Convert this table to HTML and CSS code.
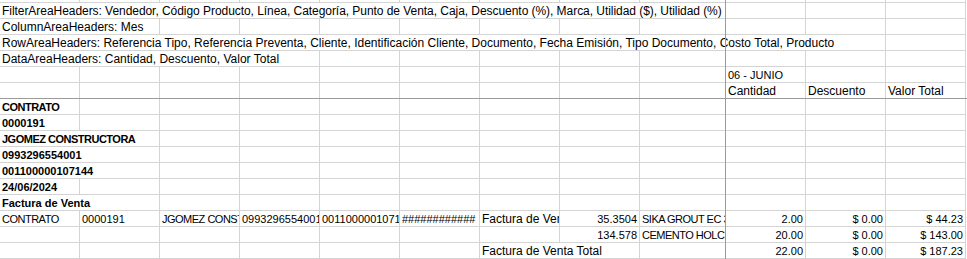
FILE: index.html
```html
<!DOCTYPE html>
<html lang="es">
<head>
<meta charset="utf-8">
<title>Hoja</title>
<link rel="stylesheet" href="styles.css">
</head>
<body>
<div class="sheet">
  <div class="grid">
    <!-- partial top row -->
    <div class="c top"></div><div class="c top"></div><div class="c top"></div><div class="c top"></div><div class="c top"></div><div class="c top"></div><div class="c top"></div><div class="c top"></div><div class="c top"></div><div class="c top"></div><div class="c top"></div><div class="c top"></div>

    <!-- row 1 -->
    <div class="c s9 fit">FilterAreaHeaders: Vendedor, Código Producto, Línea, Categoría, Punto de Venta, Caja, Descuento (%), Marca, Utilidad ($), Utilidad (%)</div>
    <div class="c"></div><div class="c"></div><div class="c"></div>

    <!-- row 2 -->
    <div class="c s2">ColumnAreaHeaders: Mes</div>
    <div class="c"></div><div class="c"></div><div class="c"></div><div class="c"></div><div class="c"></div><div class="c"></div><div class="c"></div><div class="c"></div><div class="c"></div><div class="c"></div>

    <!-- row 3 -->
    <div class="c s11">RowAreaHeaders: Referencia Tipo, Referencia Preventa, Cliente, Identificación Cliente, Documento, Fecha Emisión, Tipo Documento, Costo Total, Producto</div>
    <div class="c"></div>

    <!-- row 4 -->
    <div class="c s4">DataAreaHeaders: Cantidad, Descuento, Valor Total</div>
    <div class="c"></div><div class="c"></div><div class="c"></div><div class="c"></div><div class="c"></div><div class="c"></div><div class="c"></div><div class="c"></div>

    <!-- row 5 -->
    <div class="c"></div><div class="c"></div><div class="c"></div><div class="c"></div><div class="c"></div><div class="c"></div><div class="c"></div><div class="c"></div><div class="c"></div>
    <div class="c t">06 - JUNIO</div><div class="c"></div><div class="c"></div>

    <!-- row 6 -->
    <div class="c"></div><div class="c"></div><div class="c"></div><div class="c"></div><div class="c"></div><div class="c"></div><div class="c"></div><div class="c"></div><div class="c"></div>
    <div class="c">Cantidad</div><div class="c">Descuento</div><div class="c">Valor Total</div>

    <!-- row 7 -->
    <div class="c b k">CONTRATO</div>
    <div class="c"></div><div class="c"></div><div class="c"></div><div class="c"></div><div class="c"></div><div class="c"></div><div class="c"></div><div class="c"></div><div class="c"></div><div class="c"></div><div class="c"></div>

    <!-- row 8 -->
    <div class="c b">0000191</div>
    <div class="c"></div><div class="c"></div><div class="c"></div><div class="c"></div><div class="c"></div><div class="c"></div><div class="c"></div><div class="c"></div><div class="c"></div><div class="c"></div><div class="c"></div>

    <!-- row 9 -->
    <div class="c b k s2">JGOMEZ CONSTRUCTORA</div>
    <div class="c"></div><div class="c"></div><div class="c"></div><div class="c"></div><div class="c"></div><div class="c"></div><div class="c"></div><div class="c"></div><div class="c"></div><div class="c"></div>

    <!-- row 10 -->
    <div class="c b s2">0993296554001</div>
    <div class="c"></div><div class="c"></div><div class="c"></div><div class="c"></div><div class="c"></div><div class="c"></div><div class="c"></div><div class="c"></div><div class="c"></div><div class="c"></div>

    <!-- row 11 -->
    <div class="c b s2">001100000107144</div>
    <div class="c"></div><div class="c"></div><div class="c"></div><div class="c"></div><div class="c"></div><div class="c"></div><div class="c"></div><div class="c"></div><div class="c"></div><div class="c"></div>

    <!-- row 12 -->
    <div class="c b">24/06/2024</div>
    <div class="c"></div><div class="c"></div><div class="c"></div><div class="c"></div><div class="c"></div><div class="c"></div><div class="c"></div><div class="c"></div><div class="c"></div><div class="c"></div><div class="c"></div>

    <!-- row 13 -->
    <div class="c b s2">Factura de Venta</div>
    <div class="c"></div><div class="c"></div><div class="c"></div><div class="c"></div><div class="c"></div><div class="c"></div><div class="c"></div><div class="c"></div><div class="c"></div><div class="c"></div>

    <!-- row 14 -->
    <div class="c t k">CONTRATO</div>
    <div class="c t">0000191</div>
    <div class="c t k">JGOMEZ CONSTRUCTORA</div>
    <div class="c t">0993296554001</div>
    <div class="c t">001100000107144</div>
    <div class="c t">############</div>
    <div class="c">Factura de Venta</div>
    <div class="c t r">35.3504</div>
    <div class="c t k">SIKA GROUT EC 3 KG</div>
    <div class="c t r">2.00</div>
    <div class="c t r">$ 0.00</div>
    <div class="c t r">$ 44.23</div>

    <!-- row 15 -->
    <div class="c"></div><div class="c"></div><div class="c"></div><div class="c"></div><div class="c"></div><div class="c"></div><div class="c"></div>
    <div class="c t r">134.578</div>
    <div class="c t k">CEMENTO HOLCIM</div>
    <div class="c t r">20.00</div>
    <div class="c t r">$ 0.00</div>
    <div class="c t r">$ 143.00</div>

    <!-- row 16 -->
    <div class="c"></div><div class="c"></div><div class="c"></div><div class="c"></div><div class="c"></div><div class="c"></div>
    <div class="c s2">Factura de Venta Total</div>
    <div class="c"></div>
    <div class="c t r">22.00</div>
    <div class="c t r">$ 0.00</div>
    <div class="c t r">$ 187.23</div>
  </div>
  <div class="freeze-v"></div>
  <div class="freeze-h"></div>
</div>
</body>
</html>
```

FILE: styles.css
```css
html, body {
  margin: 0;
  padding: 0;
  background: #ffffff;
}

.sheet {
  position: relative;
  width: 967px;
  height: 259px;
  overflow: hidden;
}

.grid {
  display: grid;
  grid-template-columns: repeat(8, 80px) 86px repeat(3, 80px);
  grid-template-rows: 3px repeat(16, 16px);
  font-family: "Liberation Sans", Arial, sans-serif;
  font-size: 12px;
  color: #000000;
}

.c {
  box-sizing: border-box;
  border-right: 1px solid #d4d4d4;
  border-bottom: 1px solid #d4d4d4;
  padding: 1px 2px 0 2px;
  line-height: 14px;
  white-space: nowrap;
  overflow: hidden;
  min-width: 0;
}

.top {
  padding: 0;
}

.fit {
  letter-spacing: -0.05px;
}

/* numbers and capitals: Calibri-like narrower setting */
.t {
  font-size: 11px;
}

.k {
  letter-spacing: -0.5px;
}

.b {
  font-weight: bold;
  font-size: 11px;
}

.r {
  text-align: right;
}

.s2 { grid-column: span 2; }
.s4 { grid-column: span 4; }
.s9 { grid-column: span 9; }
.s11 { grid-column: span 11; }

.freeze-v {
  position: absolute;
  left: 725px;
  top: 0;
  width: 1px;
  height: 259px;
  background: #9b9b9b;
}

.freeze-h {
  position: absolute;
  left: 0;
  top: 98px;
  width: 967px;
  height: 1px;
  background: #9b9b9b;
}
```
